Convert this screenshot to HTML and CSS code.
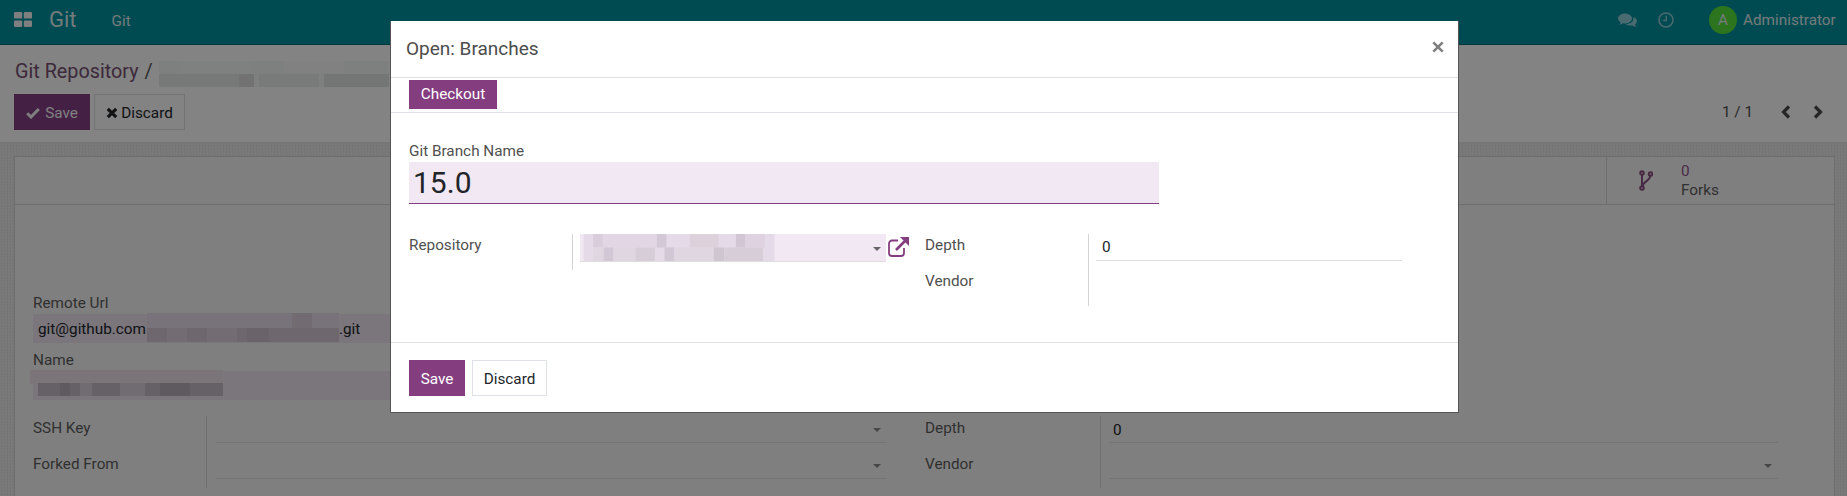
FILE: index.html
```html
<!DOCTYPE html>
<html lang="en">
<head>
<meta charset="utf-8">
<title>Git Repository</title>
<link rel="stylesheet" href="styles.css">
</head>
<body>
<div class="page">
  <header class="navbar">
    <svg class="apps" viewBox="0 0 18 15"><rect width="8.2" height="6.6" rx="1.2"/><rect x="9.8" width="8.2" height="6.6" rx="1.2"/><rect y="8.4" width="8.2" height="6.6" rx="1.2"/><rect x="9.8" y="8.4" width="8.2" height="6.6" rx="1.2"/></svg>
    <span class="brand">Git</span>
    <span class="menu">Git</span>
    <span class="nav-right">
      <svg class="chat" viewBox="0 0 19 15"><path d="M7 .5c3.9 0 7 2.2 7 5s-3.1 5-7 5c-.7 0-1.400-.1-2-.2-1 .8-2.300 1.300-3.800 1.500.7-.8 1.200-1.600 1.300-2.600C1 8 0 6.800 0 5.500 0 2.700 3.100.5 7 .5z"/><path d="M15.300 3.900C17.400 4.700 19 6.200 19 8c0 1.300-.8 2.500-2 3.300.1.900.6 1.800 1.300 2.700-1.500-.2-2.800-.8-3.800-1.600-.6.100-1.200.2-1.900.2-2 0-3.700-.7-4.800-1.700 4.600 0 8.500-2.400 7.500-7z"/></svg>
      <svg class="clock" viewBox="0 0 16 16"><circle cx="8" cy="8" r="7" fill="none" stroke-width="1.600"/><path d="M8.300 3.800v4.700H5.200" fill="none" stroke-width="1.400"/></svg>
      <span class="avatar">A</span>
      <span class="user">Administrator</span>
    </span>
  </header>

  <section class="control">
    <div class="crumbs">
      <span>Git Repository</span><span class="slash">/</span>
      <svg class="mosaic-title" viewBox="0 0 230 26"><rect width="230" height="26" fill="#f2f4f4"/><rect x="20" width="70" height="12" fill="#f4f6f6"/><rect x="125" width="60" height="12" fill="#f7f8f8"/><rect y="13" width="80" height="13" fill="#e5e7e7"/><rect x="80" y="13" width="15" height="13" fill="#dadbdb"/><rect x="100" y="13" width="60" height="13" fill="#e9ebeb"/><rect x="165" y="13" width="65" height="13" fill="#dfe1e1"/></svg>
    </div>
    <div class="actions">
      <button class="btn btn-save-main"><svg class="ico-check" viewBox="0 0 14 12"><path d="M1.200 6.200 5 10l7.800-8" fill="none" stroke-width="3"/></svg>Save</button>
      <button class="btn btn-discard-main"><svg class="ico-x" viewBox="0 0 12 12"><path d="M1.800 1.800l8.400 8.400M10.200 1.800l-8.400 8.400" fill="none" stroke-width="3.200"/></svg>Discard</button>
      <span class="pager">
        <span class="pager-text">1 / 1</span>
        <svg class="chev" viewBox="0 0 10 14"><path d="M8 1.500 2.500 7 8 12.500" fill="none" stroke-width="3.200"/></svg>
        <svg class="chev chev-next" viewBox="0 0 10 14"><path d="M2 1.500 7.500 7 2 12.500" fill="none" stroke-width="3.200"/></svg>
      </span>
    </div>
  </section>

  <main class="canvas">
    <article class="sheet">
      <div class="button-box">
        <div class="stat">
          <svg class="fork" viewBox="0 0 14 21"><g fill="none" stroke-width="2"><circle cx="3" cy="3" r="1.800"/><circle cx="11.500" cy="4" r="1.800"/><circle cx="3" cy="18" r="1.800"/><path d="M3 5v11M11.300 6c-.3 4-5.500 5-7.800 9.500"/></g></svg>
          <span class="stat-text"><span class="stat-num">0</span><span class="stat-label">Forks</span></span>
        </div>
      </div>
      <div class="sheet-body">
        <div class="label remote-label">Remote Url</div>
        <div class="tinted url-field">git@github.com<svg class="mosaic-url" viewBox="0 0 192 29"><rect width="192" height="29" fill="#e7dbeb"/><rect y="15" width="192" height="14" fill="#d4c8d4"/><rect x="20" y="15" width="20" height="14" fill="#ddd0db"/><rect x="60" y="15" width="30" height="14" fill="#ddd0db"/><rect x="100" y="15" width="22" height="14" fill="#ccbfcc"/><rect x="145" width="20" height="15" fill="#dacedb"/></svg>.git</div>
        <div class="label name-label">Name</div>
        <div class="tinted name-field"><svg class="mosaic-name" viewBox="0 0 193 26"><rect width="193" height="14" fill="#ebdfe9"/><rect x="8" y="13" width="185" height="13" fill="#c4b8c6"/><rect x="30" y="13" width="10" height="13" fill="#b7adb8"/><rect x="50" y="13" width="12" height="13" fill="#d6d0d8"/><rect x="90" y="13" width="25" height="13" fill="#d6d0d8"/><rect x="130" y="13" width="30" height="13" fill="#b7adb8"/></svg></div>
        <div class="fields">
          <div class="group group-left">
            <div class="cell-label">SSH Key</div>
            <div class="cell-value"><span class="line"><i class="caret"></i></span></div>
            <div class="cell-label">Forked From</div>
            <div class="cell-value"><span class="line"><i class="caret"></i></span></div>
          </div>
          <div class="group group-right">
            <div class="cell-label">Depth</div>
            <div class="cell-value"><span class="line line-text">0</span></div>
            <div class="cell-label">Vendor</div>
            <div class="cell-value"><span class="line"><i class="caret"></i></span></div>
          </div>
        </div>
      </div>
    </article>
  </main>
</div>

<div class="backdrop"></div>

<section class="modal">
  <header class="modal-header">
    <h4 class="modal-title">Open: Branches</h4>
    <svg class="close" viewBox="0 0 11 11"><path d="M1.200 1.200l8.600 8.600M9.800 1.200l-8.600 8.600" fill="none" stroke-width="2.400"/></svg>
  </header>
  <div class="modal-toolbar"><button class="btn btn-primary btn-checkout">Checkout</button></div>
  <div class="modal-body">
    <div class="label branch-label">Git Branch Name</div>
    <div class="branch-input">15.0</div>
    <div class="fields modal-fields">
      <div class="group group-m-left">
        <div class="cell-label">Repository</div>
        <div class="cell-value repo-cell">
          <span class="repo-field">
            <svg class="mosaic-repo" viewBox="0 0 198 28"><rect width="198" height="28" fill="#e5dbe8"/><rect x="10" width="10" height="14" fill="#d9ccdb"/><rect x="20" width="60" height="14" fill="#e3d6e4"/><rect x="76" width="10" height="14" fill="#d3c8d6"/><rect x="110" width="30" height="14" fill="#ddd1dc"/><rect x="158" width="10" height="14" fill="#d2c6d5"/><rect x="168" width="20" height="14" fill="#dfd2e0"/><rect x="10" y="14" width="20" height="14" fill="#e0d6e1"/><rect x="21" y="14" width="10" height="14" fill="#d2c8d5"/><rect x="31" y="14" width="23" height="14" fill="#e0d6e1"/><rect x="54" y="14" width="20" height="14" fill="#d7cdd9"/><rect x="84" y="14" width="10" height="14" fill="#d2c7d4"/><rect x="94" y="14" width="41" height="14" fill="#e0d6e1"/><rect x="135" y="14" width="11" height="14" fill="#cfc5d1"/><rect x="146" y="14" width="40" height="14" fill="#d7cdd9"/></svg>
            <i class="caret caret-repo"></i>
          </span>
          <svg class="external" viewBox="0 0 21 20"><g fill="none" stroke-width="1.800"><path d="M10 3.500H4a3 3 0 0 0-3 3V16a3 3 0 0 0 3 3h9a3 3 0 0 0 3-3v-5"/><path d="M8 13 17 4" stroke-width="2.600"/></g><path class="external-tip" d="M12 0H21v9z"/></svg>
        </div>
      </div>
      <div class="group group-m-right">
        <div class="cell-label">Depth</div>
        <div class="cell-value"><span class="line line-text line-modal">0</span></div>
        <div class="cell-label">Vendor</div>
        <div class="cell-value"></div>
      </div>
    </div>
  </div>
  <footer class="modal-footer">
    <button class="btn btn-primary btn-footer-save">Save</button>
    <button class="btn btn-footer-discard">Discard</button>
  </footer>
</section>
</body>
</html>
```

FILE: styles.css
```css
* { box-sizing: border-box; }
html, body { margin: 0; padding: 0; }
body {
  width: 1847px;
  height: 496px;
  overflow: hidden;
  position: relative;
  background: #fff;
  font-family: Roboto, "Noto Sans", sans-serif;
  font-size: 15.3px;
  line-height: 18px;
  color: #4c4c4c;
}
button { font: inherit; cursor: default; }

/* page under the backdrop */
.page { height: 496px; display: flex; flex-direction: column; }
.navbar {
  height: 45px;
  flex: none;
  display: flex;
  align-items: center;
  padding: 0 12px 0 14px;
  background: #008f9e;
  border-bottom: 1px solid #016a74;
  color: #dcecec;
}
.apps { width: 18px; height: 15px; margin-top: -5px; fill: #f4f4f4; }
.brand { margin-left: 17px; font-size: 22px; margin-top: -4px; }
.menu { margin-left: 35px; font-size: 15.3px; margin-top: -2px; }
.nav-right { margin-left: auto; display: flex; align-items: center; margin-top: -4px; }
.chat { width: 19px; height: 15px; fill: #fff; opacity: .55; }
.clock { width: 16px; height: 16px; margin-left: 21px; stroke: #fff; opacity: .55; }
.avatar {
  width: 28px; height: 28px; margin-left: 35px; border-radius: 50%;
  background: #55e03a; display: flex; align-items: center; justify-content: center;
  font-size: 15.3px;
}
.user { margin-left: 6px; width: 92px; white-space: nowrap; }

.control {
  height: 98px;
  flex: none;
  padding: 11px 14px 0 14px;
  background: #fbfbfb;
  border-bottom: 1px solid #e2e2e2;
  color: #555;
}
.crumbs { display: flex; align-items: center; height: 32px; font-size: 19.8px; color: #75506f; margin-left: 1px; }
.slash { margin-left: 6px; color: #555; }
.mosaic-title { width: 232px; height: 26px; margin-left: 5px; margin-top: 4px; }
.actions { display: flex; align-items: center; margin-top: 6px; height: 36px; }
.btn { height: 36px; padding: 0; border: 1px solid transparent; border-radius: 0; background: none; display: inline-flex; align-items: center; justify-content: center; }
.btn-save-main { width: 76px; background: #853e85; color: #f4f4f4; padding-top: 1px; }
.btn-discard-main { width: 91px; margin-left: 4px; border-color: #dcdcdc; color: #212529; background: #fbfbfb; padding-top: 1px; }
.ico-check { width: 14px; height: 12px; margin-right: 5px; stroke: #f4f4f4; }
.ico-x { width: 12px; height: 12px; margin-right: 3px; stroke: #212529; }
.pager { margin-left: auto; display: flex; align-items: center; margin-right: 10px; }
.pager-text { color: #4c4c4c; font-size: 15.3px; }
.chev { width: 10px; height: 14px; margin-left: 28px; stroke: #4a4a4a; }
.chev-next { margin-left: 22px; }

.canvas {
  flex: 1;
  padding: 13px 12px 0 14px;
  background-color: #e6e6e6;
  background-image: repeating-conic-gradient(#e0e0e0 0 25%, #ececec 0 50%);
  background-size: 3px 3px;
  overflow: hidden;
}
.sheet { height: 400px; background: #f4f4f4; border: 1px solid #d4d4d4; }
.button-box { height: 48px; border-bottom: 1px solid #d4d4d4; display: flex; justify-content: flex-end; }
.stat { width: 228px; border-left: 1px solid #d4d4d4; display: flex; align-items: center; padding-left: 32px; }
.fork { width: 14px; height: 21px; stroke: #8a4f82; }
.stat-text { display: flex; flex-direction: column; margin-left: 28px; }
.stat-num { color: #8f5589; line-height: 19px; margin-top: 1px; }
.stat-label { line-height: 19px; color: #5c5c5c; }

.sheet-body { padding: 89px 0 0 18px; color: #5c5c5c; }
.label { font-weight: 400; color: inherit; }
.tinted { background: #ebe2ed; color: #212529; width: 1330px; }
.url-field { height: 29px; margin-top: 2px; display: flex; align-items: center; padding-left: 5px; }
.mosaic-url { width: 192px; height: 29px; margin: -3px 0 0 1px; }
.name-label { margin-top: 8px; }
.name-field { height: 29px; margin-top: 2px; position: relative; }
.mosaic-name { position: absolute; left: -3px; top: -1px; width: 193px; height: 26px; }
.fields { display: flex; margin-top: 16px; }
.group { display: grid; grid-auto-rows: 36px; }
.group-left { grid-template-columns: 173px 681px; }
.group-right { grid-template-columns: 175px 678px; margin-left: 38px; }
.cell-label { padding-top: 3px; }
.cell-value { border-left: 1px solid #d4d4d4; padding-left: 8px; }
.line { display: block; position: relative; height: 27px; border-bottom: 1px solid #dedede; color: #212529; padding-top: 5px; }
.group-left .line { margin-left: 1px; }
.line-text { padding-left: 4px; }
.caret { position: absolute; right: 6px; top: 12px; width: 0; height: 0; border-left: 4px solid transparent; border-right: 4px solid transparent; border-top: 4px solid #888; }

.backdrop { position: absolute; inset: 0; background: rgba(0, 0, 0, .48); }

/* dialog */
.modal {
  position: absolute;
  left: 390px; top: 21px;
  width: 1069px; height: 392px;
  background: #fff;
  border: 1px solid #555;
  border-top: 0;
  display: flex;
  flex-direction: column;
}
.modal-header { height: 57px; flex: none; border-bottom: 1px solid #dee2e6; display: flex; align-items: center; justify-content: space-between; padding: 0 14px 0 15px; }
.modal-title { margin: 0; font-size: 19px; font-weight: 400; color: #4c4c4c; }
.close { width: 12px; height: 12px; stroke: #808080; margin-top: -4px; }
.modal-toolbar { height: 35px; flex: none; padding: 2px 18px 0; border-bottom: 1px solid #dee2e6; }
.btn-primary { background: #843e80; color: #fff; }
.btn-checkout { width: 88px; height: 29px; padding-bottom: 1px; }
.modal-body { height: 229px; flex: none; padding: 29px 18px 0; color: #505050; }
.branch-label { height: 20px; }
.branch-input { width: 750px; height: 42px; background: #f1e8f3; border-bottom: 1px solid #843e80; color: #212529; font-size: 30px; line-height: 42px; padding-left: 4px; }
.modal-fields { margin-top: 30px; }
.group-m-left { grid-template-columns: 163px 353px; }
.group-m-right { grid-template-columns: 163px 314px; }
.modal-fields .cell-label { padding-top: 2px; }
.group-m-left .cell-value, .group-m-right .cell-value { padding-left: 7px; }
.line-modal { padding-top: 4px; padding-left: 6px; }
.repo-cell { display: flex; align-items: flex-start; }
.repo-field { width: 306px; height: 28px; background: #f1e8f3; border-bottom: 1px solid #ddd; position: relative; display: block; flex: none; }
.mosaic-repo { width: 198px; height: 27px; display: block; }
.caret-repo { right: 5px; top: 13px; border-top-color: #666; }
.external { width: 21px; height: 20px; margin: 3px 0 0 2px; stroke: #843e80; flex: none; }
.external-tip { fill: #843e80; stroke: none; }
.modal-footer { flex: 1; border-top: 1px solid #dee2e6; padding: 17px 18px 0; display: flex; gap: 7px; align-items: flex-start; }
.btn-footer-save { width: 56px; padding-top: 1px; }
.btn-footer-discard { width: 75px; border-color: #dee2e6; color: #212529; background: #fff; padding-top: 1px; }
```
